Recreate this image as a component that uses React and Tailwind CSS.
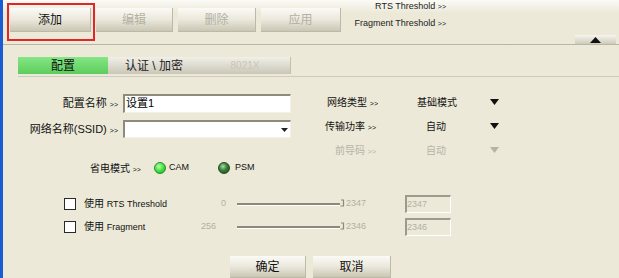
import React from "react";

const FONT = "font-['Liberation_Sans','Noto_Sans_CJK_SC',sans-serif]";

function XpButton({ children, disabled, className = "" }) {
  return (
    <div
      className={`flex items-center justify-center bg-linear-to-b from-[#fbfaf6] via-[#ebe8dc] to-[#cbc7b5] border-b border-r border-[#bdb9a8] text-[12px] ${
        disabled ? "text-[#b3b0a3]" : "text-[#111]"
      } ${className}`}
    >
      {children}
    </div>
  );
}

function Arrow({ gray }) {
  return (
    <svg width="9" height="6" viewBox="0 0 9 6" className="shrink-0">
      <polygon points="0,0 9,0 4.5,6" fill={gray ? "#b6b3a6" : "#111"} />
    </svg>
  );
}

function Radio({ on }) {
  return (
    <span
      className={`inline-block w-[12px] h-[12px] rounded-full border ${
        on
          ? "border-[#2c8a2c] bg-[radial-gradient(circle_at_40%_35%,#b8ffb0,#38e038_55%,#1faa1f)]"
          : "border-[#1e4d1e] bg-[radial-gradient(circle_at_40%_35%,#a8dca8,#3a7d3a_45%,#1d4a1d)]"
      }`}
    />
  );
}

function Slider({ min, minPad, max }) {
  return (
    <>
      <span className={`w-[32px] text-right text-[9px] text-[#b3b0a3] ${minPad}`}>{min}</span>
      <span className="ml-[5px] w-[103px] h-[2px] bg-[#8c897b] border-b border-white box-content" />
      <svg width="5" height="8" viewBox="0 0 5 8" className="shrink-0 -mt-[3px]">
        <path d="M1 1 H3.5 V7 H0.5" fill="none" stroke="#8c897b" strokeWidth="1.2" />
      </svg>
      <span className="ml-[1px] w-[59px] text-[9px] text-[#b3b0a3]">{max}</span>
      <span className="w-[46px] h-[18px] border-t-2 border-l-2 border-[#9d9a8c] border-b border-r border-b-white border-r-white bg-[#ece9d8] text-[9px] text-[#b3b0a3] leading-[14px]">
        {max}
      </span>
    </>
  );
}

export default function App() {
  return (
    <div className={`w-[619px] h-[278px] overflow-hidden flex bg-[#ece9d8] ${FONT}`}>
      <div className="w-[3px] bg-[#1b5bd4] shrink-0" />
      <div className="relative flex-1 flex flex-col">
        {/* top toolbar */}
        <div className="h-[47px] flex items-start pl-[7px] border-b border-[#b9b6a6] bg-linear-to-b from-[#fbfaf6] to-[#ece9d8] to-[30%]">
          <XpButton className="mt-[8px] h-[24px] w-[81px]">添加</XpButton>
          <XpButton disabled className="mt-[8px] h-[24px] w-[77px] ml-[5px]">编辑</XpButton>
          <XpButton disabled className="mt-[8px] h-[24px] w-[78px] ml-[5px]">删除</XpButton>
          <XpButton disabled className="mt-[8px] h-[24px] w-[80px] ml-[5px]">应用</XpButton>
          <div className="w-[105px] text-right text-[9px] leading-[16px] text-[#222] -mt-[2px]">
            <div>RTS Threshold <span className="text-[7px]">&gt;&gt;</span></div>
            <div>Fragment Threshold <span className="text-[7px]">&gt;&gt;</span></div>
          </div>
          <div className="ml-auto self-end mr-[3px] w-[41px] h-[9px] flex items-center justify-center bg-linear-to-b from-[#f6f5f0] to-[#cfcbba]">
            <svg width="11" height="6" viewBox="0 0 11 6">
              <polygon points="0,6 11,6 5.5,0" fill="#111" />
            </svg>
          </div>
        </div>

        {/* tabs */}
        <div className="mt-[12px] ml-[15px] pb-[2px] border-b border-[#cfccbc] flex">
          <div className="flex h-[17px] border-r border-[#c3c0b0]">
            <div className="w-[90px] flex items-center justify-center bg-linear-to-b from-[#84e684] to-[#5ccd5c] text-[12px] text-[#111]">配置</div>
            <div className="w-[92px] flex items-center justify-center bg-linear-to-b from-[#f1efe8] to-[#cac7b8] text-[12px] text-[#222]">认证 \ 加密</div>
            <div className="w-[90px] flex items-center justify-center bg-linear-to-b from-[#f1efe8] to-[#cac7b8] text-[10px] text-[#c9c6b8]">8021X</div>
          </div>
        </div>

        {/* form */}
        <div className="mt-[17px] flex">
          <div className="w-[288px] flex flex-col">
            <div className="h-[19px] flex items-center">
              <span className="w-[115px] text-right text-[11px] text-[#111]">配置名称 <span className="text-[7px]">&gt;&gt;</span></span>
              <div className="ml-[5px] w-[168px] h-[19px] bg-white border-t-2 border-l-2 border-[#8e8b7d] border-b border-r border-b-[#f3f1e8] border-r-[#f3f1e8] text-[11px] leading-[15px] pl-[1px]">设置1</div>
            </div>
            <div className="mt-[7px] h-[18px] flex items-center">
              <span className="w-[115px] text-right text-[11px] text-[#111]">网络名称(SSID) <span className="text-[7px]">&gt;&gt;</span></span>
              <div className="ml-[5px] w-[168px] h-[18px] bg-white border-t-2 border-l-2 border-[#8e8b7d] border-b border-r border-b-[#f3f1e8] border-r-[#f3f1e8] flex justify-end items-center pr-[2px]">
                <svg width="7" height="4" viewBox="0 0 7 4"><polygon points="0,0 7,0 3.5,4" fill="#222" /></svg>
              </div>
            </div>
            <div className="mt-[23px] h-[14px] flex items-center pl-[87px] text-[10px] text-[#111]">
              <span>省电模式 <span className="text-[7px]">&gt;&gt;</span></span>
              <span className="ml-[13px] flex items-center"><Radio on /></span>
              <span className="ml-[3px] text-[9px]">CAM</span>
              <span className="ml-[29px] flex items-center"><Radio /></span>
              <span className="ml-[5px] text-[9px]">PSM</span>
            </div>
          </div>
          <div className="flex flex-col text-[10px]">
            <div className="h-[16px] flex items-center text-[#111]">
              <span className="w-[87px] text-right">网络类型 <span className="text-[7px]">&gt;&gt;</span></span>
              <span className="w-[112px] pl-[6px] text-center">基础模式</span>
              <Arrow />
            </div>
            <div className="mt-[8px] h-[16px] flex items-center text-[#111]">
              <span className="w-[85px] text-right">传输功率 <span className="text-[7px]">&gt;&gt;</span></span>
              <span className="w-[114px] pl-[6px] text-center">自动</span>
              <Arrow />
            </div>
            <div className="mt-[8px] h-[16px] flex items-center text-[#b6b3a6]">
              <span className="w-[85px] text-right">前导码 <span className="text-[7px]">&gt;&gt;</span></span>
              <span className="w-[114px] pl-[6px] text-center">自动</span>
              <Arrow gray />
            </div>
          </div>
        </div>

        {/* thresholds */}
        <div className="mt-[20px] pl-[61px] flex flex-col gap-[5px]">
          <div className="h-[18px] flex items-center">
            <span className="w-[12px] h-[12px] border border-[#2a2a2a] bg-white" />
            <span className="ml-[8px] w-[116px] text-[10px] text-[#111]">使用 <span className="text-[9px]">RTS Threshold</span></span>
            <Slider min="0" minPad="pr-[6px]" max="2347" />
          </div>
          <div className="h-[18px] flex items-center">
            <span className="w-[12px] h-[12px] border border-[#2a2a2a] bg-white" />
            <span className="ml-[8px] w-[116px] text-[10px] text-[#111]">使用 <span className="text-[9px]">Fragment</span></span>
            <Slider min="256" minPad="pr-[16px]" max="2346" />
          </div>
        </div>

        {/* bottom buttons */}
        <div className="mt-[20px] pl-[227px] flex">
          <XpButton className="w-[76px] h-[22px]">确定</XpButton>
          <XpButton className="ml-[7px] w-[78px] h-[22px]">取消</XpButton>
        </div>

        {/* highlight box */}
        <div className="absolute left-[4px] top-[3px] w-[88px] h-[38px] border-2 border-[#e02626]" />
      </div>
    </div>
  );
}
